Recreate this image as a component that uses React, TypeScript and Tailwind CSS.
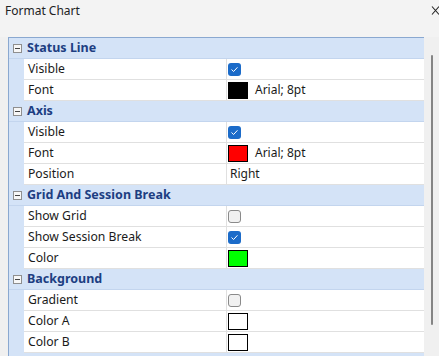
import React from "react";

type Row =
  | { kind: "cat"; label: string }
  | { kind: "prop"; label: string; value: React.ReactNode };

const Check = ({ on }: { on: boolean }) =>
  on ? (
    <div className="w-[13px] h-[13px] rounded-[3px] bg-[#1b6bc9] flex items-center justify-center">
      <svg width="9" height="9" viewBox="0 0 9 9">
        <path d="M1.8 4.8 L3.6 6.5 L7.2 2.6" fill="none" stroke="white" strokeWidth="1" strokeLinecap="round" strokeLinejoin="round" />
      </svg>
    </div>
  ) : (
    <div className="w-[13px] h-[13px] rounded-[3px] bg-[#f1f1f1] border border-[#8a8a8a]" />
  );

const Swatch = ({ color, text }: { color: string; text?: string }) => (
  <div className="flex items-center h-full">
    <div className="w-[20px] h-[17px] border border-black" style={{ backgroundColor: color }} />
    {text && <span className="ml-[7px]">{text}</span>}
  </div>
);

const rows: Row[] = [
  { kind: "cat", label: "Status Line" },
  { kind: "prop", label: "Visible", value: <Check on /> },
  { kind: "prop", label: "Font", value: <Swatch color="#000000" text="Arial; 8pt" /> },
  { kind: "cat", label: "Axis" },
  { kind: "prop", label: "Visible", value: <Check on /> },
  { kind: "prop", label: "Font", value: <Swatch color="#ff0000" text="Arial; 8pt" /> },
  { kind: "prop", label: "Position", value: <span className="ml-[2px]">Right</span> },
  { kind: "cat", label: "Grid And Session Break" },
  { kind: "prop", label: "Show Grid", value: <Check on={false} /> },
  { kind: "prop", label: "Show Session Break", value: <Check on /> },
  { kind: "prop", label: "Color", value: <Swatch color="#00ff00" /> },
  { kind: "cat", label: "Background" },
  { kind: "prop", label: "Gradient", value: <Check on={false} /> },
  { kind: "prop", label: "Color A", value: <Swatch color="#ffffff" /> },
  { kind: "prop", label: "Color B", value: <Swatch color="#ffffff" /> },
  { kind: "cat", label: "" },
];

const Minus = () => (
  <div className="w-[9px] h-[9px] border border-[#8f8f8f] bg-[#f7f7f7] flex items-center justify-center">
    <div className="w-[5px] h-[1px] bg-[#444]" />
  </div>
);

export default function App() {
  return (
    <div
      className="w-[439px] h-[356px] bg-[#f0f0f0] overflow-hidden flex flex-col text-[12px] text-[#1a1a1a]"
      style={{ fontFamily: '"Noto Sans", "Open Sans", sans-serif' }}
    >
      <div className="h-[37px] flex items-start justify-between bg-[#f3f3f3]">
        <span className="ml-[5px] mt-[2px] text-[12px] text-[#222]">Format Chart</span>
        <svg className="mt-[6px]" width="8" height="10" viewBox="0 0 8 10">
          <path d="M1 0.5 L8 8.5 M1 8.5 L8 0.5" stroke="#222" strokeWidth="1.1" fill="none" />
        </svg>
      </div>
      <div className="flex flex-1 min-h-0">
        <div className="ml-[8px] w-[416px] border-l border-t border-[#8aa8d0] bg-[#d4e3f7] flex flex-col">
          {rows.map((r, i) =>
            r.kind === "cat" ? (
              <div key={i} className="h-[21px] shrink-0 flex items-center bg-[#d4e3f7] border-b border-[#c3d5ee]">
                <div className="w-[15px] flex justify-center pl-[2px]">
                  {r.label && <Minus />}
                </div>
                <span className="ml-[3px] font-bold text-[#1d3e82] text-[12.5px]">{r.label}</span>
              </div>
            ) : (
              <div key={i} className="h-[21px] shrink-0 flex">
                <div className="w-[15px] shrink-0" />
                <div className="flex-1 flex bg-white border-b border-[#e0e0e0]">
                  <div className="w-[203px] shrink-0 pl-[4px] flex items-center border-r border-[#e0e0e0] text-[12.2px]">
                    {r.label}
                  </div>
                  <div className="flex-1 pl-[1px] flex items-center">{r.value}</div>
                </div>
              </div>
            )
          )}
        </div>
        <div className="w-[15px] relative bg-[#f0f0f0]">
          <div className="absolute left-[7px] top-[18px] w-[2px] h-[270px] bg-[#858585] rounded-full" />
        </div>
      </div>
    </div>
  );
}
